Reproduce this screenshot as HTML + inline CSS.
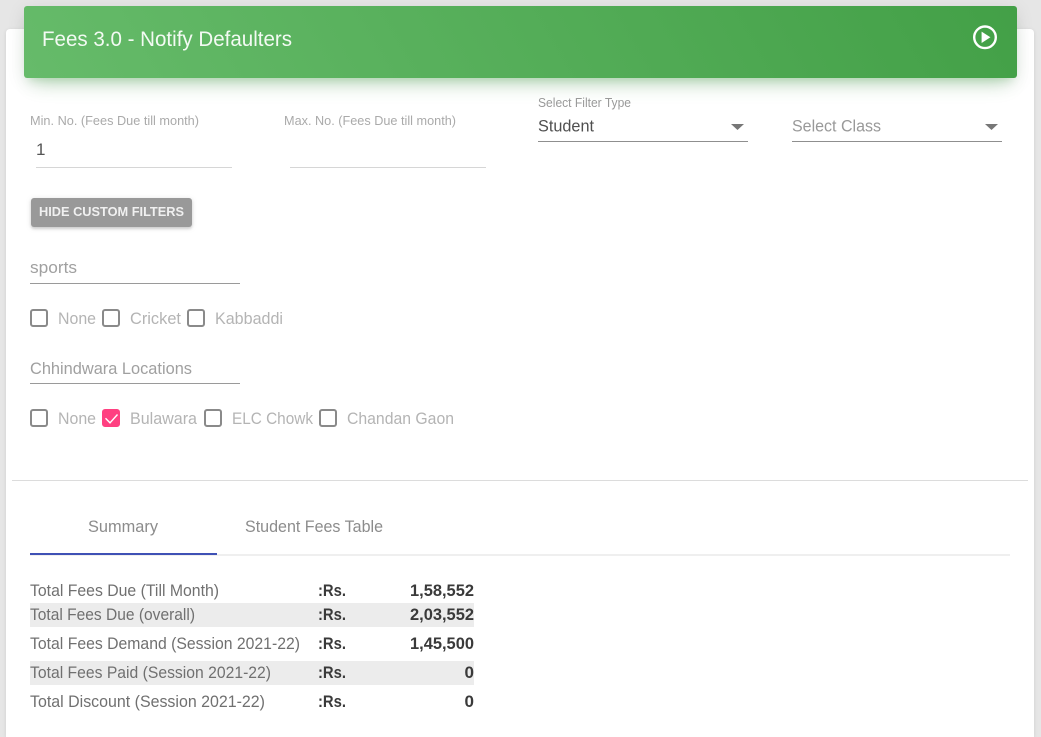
<!DOCTYPE html>
<html>
<head>
<meta charset="utf-8">
<style>
html,body{margin:0;padding:0;width:1041px;height:737px;overflow:hidden;background:#e6e6e6}
.a{position:absolute}
#wrap{position:absolute;left:0;top:0;width:1041px;height:737px;overflow:hidden}
#card{left:6px;top:29px;width:1028px;height:708px;background:#fff;border-radius:4px 4px 0 0;box-shadow:0 1px 4px rgba(0,0,0,.1)}
#head{left:24px;top:6px;width:993px;height:72px;border-radius:3px;background:linear-gradient(60deg,#66bb6a,#43a047);box-shadow:0 14px 20px -10px rgba(76,175,80,.32),0 4px 18px 0 rgba(0,0,0,.1),0 7px 8px -5px rgba(76,175,80,.2)}
#btn{left:31px;top:198px;width:161px;height:29px;background:#999;border-radius:3px;box-shadow:0 2px 2px rgba(153,153,153,.3),0 1px 5px rgba(153,153,153,.35)}
.l{height:1px}
.cb{width:14px;height:14px;border:2px solid #8a8a8a;border-radius:3px}
.row{left:30px;width:444px;height:24px;background:#ececec}
svg{position:absolute;left:0;top:0;filter:blur(.3px)}
text{font-family:"Liberation Sans",sans-serif}
</style>
</head>
<body>
<div id="wrap">
<div class="a" id="card"></div>
<div class="a" id="head"></div>
<div class="a" id="btn"></div>

<div class="a l" style="left:36px;top:167px;width:196px;background:#d6d6d6"></div>
<div class="a l" style="left:290px;top:167px;width:196px;background:#d6d6d6"></div>
<div class="a l" style="left:538px;top:141px;width:210px;background:#8f8f8f"></div>
<div class="a l" style="left:792px;top:141px;width:210px;background:#8f8f8f"></div>
<div class="a l" style="left:30px;top:283px;width:210px;background:#9a9a9a"></div>
<div class="a l" style="left:30px;top:383px;width:210px;background:#9a9a9a"></div>

<div class="a cb" style="left:30px;top:309px"></div>
<div class="a cb" style="left:102px;top:309px"></div>
<div class="a cb" style="left:187px;top:309px"></div>
<div class="a cb" style="left:30px;top:409px"></div>
<div class="a cb" style="left:102px;top:409px;background:#ff4081;border-color:#ff4081"></div>
<div class="a cb" style="left:204px;top:409px"></div>
<div class="a cb" style="left:319px;top:409px"></div>

<div class="a l" style="left:12px;top:480px;width:1016px;background:#dcdcdc"></div>
<div class="a" style="left:30px;top:554px;width:980px;height:2px;background:#efefef"></div>
<div class="a" style="left:30px;top:553px;width:187px;height:2px;background:#3f51b5"></div>

<div class="a row" style="top:603px"></div>
<div class="a row" style="top:661px"></div>

<svg width="1041" height="737" viewBox="0 0 1041 737">
  <g fill="#fff">
    <text x="42" y="46" font-size="21.5" fill="#f3faf3" textLength="250" lengthAdjust="spacingAndGlyphs">Fees 3.0 - Notify Defaulters</text>
    <text x="39" y="216" font-size="13" font-weight="bold" fill="#f0f0f0" textLength="145" lengthAdjust="spacingAndGlyphs">HIDE CUSTOM FILTERS</text>
  </g>
  <circle cx="985" cy="37.3" r="10.8" fill="none" stroke="#fff" stroke-width="2.4"/>
  <path d="M981.6 31.6L990.4 37.3L981.6 43Z" fill="#fff"/>

  <g font-size="13" fill="#aaa">
    <text x="30" y="125" textLength="169" lengthAdjust="spacingAndGlyphs">Min. No. (Fees Due till month)</text>
    <text x="284" y="125" textLength="172" lengthAdjust="spacingAndGlyphs">Max. No. (Fees Due till month)</text>
    <text x="538" y="107" fill="#999" font-size="12.5" textLength="93" lengthAdjust="spacingAndGlyphs">Select Filter Type</text>
  </g>
  <text x="36" y="155" font-size="17" fill="#555">1</text>
  <text x="538" y="131.5" font-size="17" fill="#4f4f4f" textLength="56" lengthAdjust="spacingAndGlyphs">Student</text>
  <text x="792" y="131.5" font-size="17" fill="#999" textLength="89" lengthAdjust="spacingAndGlyphs">Select Class</text>
  <path d="M731 124H744L737.5 130Z" fill="#777"/>
  <path d="M985 124H998L991.5 130Z" fill="#777"/>

  <g font-size="17" fill="#a0a0a0">
    <text x="30" y="273" textLength="47" lengthAdjust="spacingAndGlyphs">sports</text>
    <text x="30" y="374" textLength="162" lengthAdjust="spacingAndGlyphs">Chhindwara Locations</text>
  </g>
  <g font-size="17" fill="#b4b4b4">
    <text x="58" y="324" textLength="38" lengthAdjust="spacingAndGlyphs">None</text>
    <text x="130" y="324" textLength="51" lengthAdjust="spacingAndGlyphs">Cricket</text>
    <text x="215" y="324" textLength="68" lengthAdjust="spacingAndGlyphs">Kabbaddi</text>
    <text x="58" y="424" textLength="38" lengthAdjust="spacingAndGlyphs">None</text>
    <text x="130" y="424" textLength="67" lengthAdjust="spacingAndGlyphs">Bulawara</text>
    <text x="232" y="424" textLength="81" lengthAdjust="spacingAndGlyphs">ELC Chowk</text>
    <text x="347" y="424" textLength="107" lengthAdjust="spacingAndGlyphs">Chandan Gaon</text>
  </g>
  <path d="M105.5 418.3L110 422.8L117.5 414.5" fill="none" stroke="#fff" stroke-width="1.4"/>

  <g font-size="17" fill="#8c8c8c">
    <text x="88" y="532" textLength="70" lengthAdjust="spacingAndGlyphs">Summary</text>
    <text x="245" y="532" textLength="138" lengthAdjust="spacingAndGlyphs">Student Fees Table</text>
  </g>

  <g font-size="17" fill="#707070">
    <text x="30" y="596" textLength="189" lengthAdjust="spacingAndGlyphs">Total Fees Due (Till Month)</text>
    <text x="30" y="620" textLength="165" lengthAdjust="spacingAndGlyphs">Total Fees Due (overall)</text>
    <text x="30" y="649" textLength="270" lengthAdjust="spacingAndGlyphs">Total Fees Demand (Session 2021-22)</text>
    <text x="30" y="678" textLength="241" lengthAdjust="spacingAndGlyphs">Total Fees Paid (Session 2021-22)</text>
    <text x="30" y="707" textLength="235" lengthAdjust="spacingAndGlyphs">Total Discount (Session 2021-22)</text>
  </g>
  <g font-size="17" font-weight="bold" fill="#3a3a3a">
    <text x="318" y="596" textLength="28" lengthAdjust="spacingAndGlyphs">:Rs.</text>
    <text x="318" y="620" textLength="28" lengthAdjust="spacingAndGlyphs">:Rs.</text>
    <text x="318" y="649" textLength="28" lengthAdjust="spacingAndGlyphs">:Rs.</text>
    <text x="318" y="678" textLength="28" lengthAdjust="spacingAndGlyphs">:Rs.</text>
    <text x="318" y="707" textLength="28" lengthAdjust="spacingAndGlyphs">:Rs.</text>
    <text x="410" y="596" textLength="64" lengthAdjust="spacingAndGlyphs">1,58,552</text>
    <text x="410" y="620" textLength="64" lengthAdjust="spacingAndGlyphs">2,03,552</text>
    <text x="410" y="649" textLength="64" lengthAdjust="spacingAndGlyphs">1,45,500</text>
    <text x="474" y="678" text-anchor="end">0</text>
    <text x="474" y="707" text-anchor="end">0</text>
  </g>
</svg>
</div>
</body>
</html>
